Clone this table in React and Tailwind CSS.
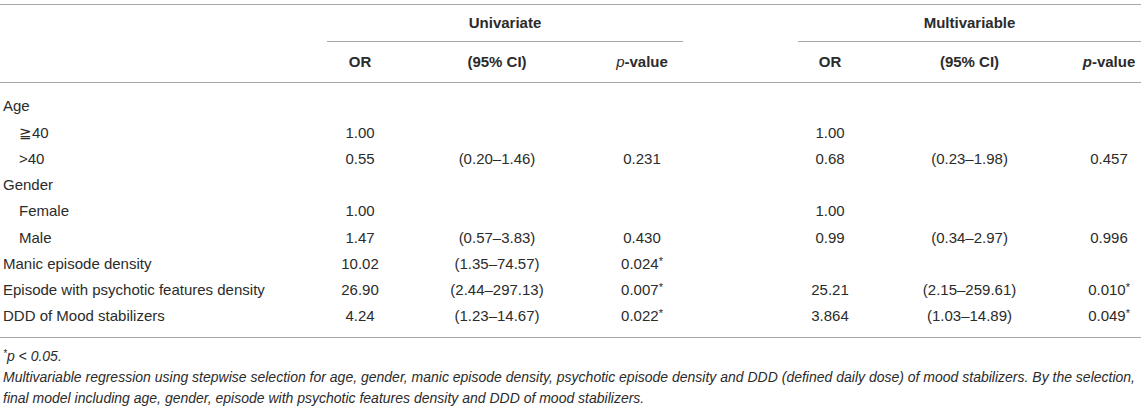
const rows = [
  { label: "Age", indent: false },
  { label: "≧40", indent: true, or1: "1.00", or2: "1.00" },
  { label: ">40", indent: true, or1: "0.55", ci1: "(0.20–1.46)", p1: "0.231", or2: "0.68", ci2: "(0.23–1.98)", p2: "0.457" },
  { label: "Gender", indent: false },
  { label: "Female", indent: true, or1: "1.00", or2: "1.00" },
  { label: "Male", indent: true, or1: "1.47", ci1: "(0.57–3.83)", p1: "0.430", or2: "0.99", ci2: "(0.34–2.97)", p2: "0.996" },
  { label: "Manic episode density", or1: "10.02", ci1: "(1.35–74.57)", p1: "0.024", s1: true },
  { label: "Episode with psychotic features density", or1: "26.90", ci1: "(2.44–297.13)", p1: "0.007", s1: true, or2: "25.21", ci2: "(2.15–259.61)", p2: "0.010", s2: true },
  { label: "DDD of Mood stabilizers", or1: "4.24", ci1: "(1.23–14.67)", p1: "0.022", s1: true, or2: "3.864", ci2: "(1.03–14.89)", p2: "0.049", s2: true },
];

function PVal({ v, star }) {
  if (!v) return null;
  return (
    <>
      {v}
      {star && <span className="text-[11px] align-[4px] leading-none">*</span>}
    </>
  );
}

export default function App() {
  return (
    <div className="bg-white w-[1145px] h-[406px] overflow-hidden pt-[4px] text-[#2b2b2b]" style={{ fontFamily: '"Liberation Sans", Arial, sans-serif' }}>
      <table className="table-fixed border-collapse w-[1141px] text-[15px]">
        <colgroup>
          <col className="w-[327px]" />
          <col className="w-[66px]" />
          <col className="w-[208px]" />
          <col className="w-[82px]" />
          <col className="w-[115px]" />
          <col className="w-[64px]" />
          <col className="w-[215px]" />
          <col className="w-[64px]" />
        </colgroup>
        <thead>
          <tr className="h-[37px] border-t border-[#a8a8a8]">
            <th />
            <th colSpan={3} className="border-b border-[#a8a8a8] font-bold text-center">Univariate</th>
            <th />
            <th colSpan={3} className="border-b border-[#a8a8a8] font-bold text-center">Multivariable</th>
          </tr>
          <tr className="h-[41px] border-b border-[#a8a8a8] font-bold">
            <th />
            <th className="text-center">OR</th>
            <th className="text-center">(95% CI)</th>
            <th className="text-center"><span className="italic font-normal">p</span>-value</th>
            <th />
            <th className="text-center">OR</th>
            <th className="text-center">(95% CI)</th>
            <th className="text-center"><span className="italic">p</span>-value</th>
          </tr>
        </thead>
        <tbody>
          <tr className="h-[11px]"><td colSpan={8} /></tr>
          {rows.map((r) => (
            <tr key={r.label} className="h-[26.25px]">
              <td className={r.indent ? "pl-[19px]" : "pl-[3px]"}>{r.label}</td>
              <td className="text-center">{r.or1}</td>
              <td className="text-center">{r.ci1}</td>
              <td className="text-center"><PVal v={r.p1} star={r.s1} /></td>
              <td />
              <td className="text-center">{r.or2}</td>
              <td className="text-center">{r.ci2}</td>
              <td className="text-center"><PVal v={r.p2} star={r.s2} /></td>
            </tr>
          ))}
          <tr className="h-[8px] border-b border-[#a8a8a8]"><td colSpan={8} /></tr>
        </tbody>
      </table>
      <div className="pt-[8px] pl-[3px] italic text-[14px] leading-[21px]">
        <p><span className="text-[10px] align-[4px] leading-none">*</span>p &lt; 0.05.</p>
        <p>Multivariable regression using stepwise selection for age, gender, manic episode density, psychotic episode density and DDD (defined daily dose) of mood stabilizers. By the selection, final model including age, gender, episode with psychotic features density and DDD of mood stabilizers.</p>
      </div>
    </div>
  );
}
